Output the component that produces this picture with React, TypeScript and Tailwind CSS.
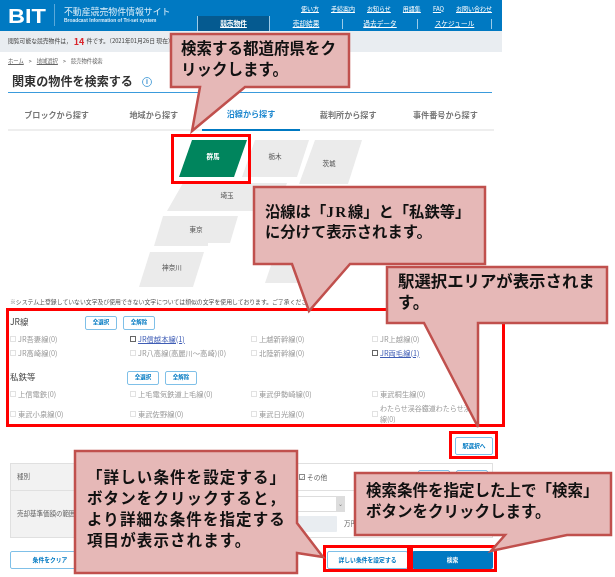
const font = { fontFamily: '"Noto Sans CJK JP","Noto Sans",sans-serif' };

function Link({ children }: { children: string }) {
  return <span className="underline text-white">{children}</span>;
}

function SmallBtn({ children, className = "" }: { children?: string; className?: string }) {
  return (
    <button className={"w-[32px] h-[14px] shrink-0 rounded-[2px] border border-[#7fc0e8] bg-white text-[5.5px] leading-none font-bold text-[#0079c2] " + className}>
      {children}
    </button>
  );
}

function Check({ label, on, tight }: { label: string; on?: boolean; tight?: boolean }) {
  return (
    <div className={tight ? "flex items-center gap-[2px] text-[7px] leading-[11px]" : "flex items-center gap-[2px] text-[7.3px] leading-[11px]"}>
      <span className={on ? "w-[6px] h-[6px] shrink-0 border border-[#666]" : "w-[6px] h-[6px] shrink-0 border border-[#e2e2e2]"} />
      <span className={on ? "text-[#3f5db5] underline" : "text-[#9a9a9a]"}>{label}</span>
    </div>
  );
}

function Row({ items }: { items: { l: string; on?: boolean; tight?: boolean }[] }) {
  return (
    <div className="grid grid-cols-[120px_121px_121px_110px] grid-rows-[14px] h-[14px] items-center">
      {items.map((i) => (
        <Check key={i.l} label={i.l} on={i.on} tight={i.tight} />
      ))}
    </div>
  );
}

const fill = "#e6b8b7";
const line = "#c0504d";

const callouts = [
  "171,34 349,34 349,87 245,87 192,131 200,87 171,87",
  "254,187 485,187 485,264 350,264 309,311 292,264 254,264",
  "387,267 607,267 607,323 478,323 478,427 424,323 387,323",
  "75,451 297,451 297,523 323,557 297,553 297,573 75,573",
  "355,473 611,473 611,535 567,535 491,551 505,535 355,535",
];

const redBoxes = [
  "left-[171px] top-[134px] w-[80px] h-[50px]",
  "left-[6px] top-[308px] w-[499px] h-[119px]",
  "left-[449px] top-[431px] w-[49px] h-[28px]",
  "left-[323px] top-[545px] w-[87px] h-[27px]",
  "left-[410px] top-[545px] w-[87px] h-[27px]",
];

export default function App() {
  return (
    <div style={font} className="relative w-[615px] h-[577px] overflow-hidden bg-white blur-[0.4px]">
      <div className="w-[502px]">
        {/* header */}
        <header className="relative h-[31px] bg-[#0079c2] text-white flex">
          <div className="flex items-center pl-[8px] w-[54px]">
            <span className="inline-block origin-left scale-x-[1.12] text-[21px] leading-none font-black" style={{ fontFamily: '"Liberation Sans",sans-serif' }}>BIT</span>
          </div>
          <div className="w-px h-[22px] mt-[4px] bg-[#5aa9da]" />
          <div className="pl-[9px] pt-[6px]">
            <div className="text-[8.9px] leading-[12px] text-[#d8ecf8]">不動産競売物件情報サイト</div>
            <div className="text-[4.9px] leading-[6px] font-bold text-[#d8ecf8]" style={{ fontFamily: '"Liberation Sans",sans-serif' }}>Broadcast Information of Tri-set system</div>
          </div>
          <div className="ml-auto w-[305px] flex flex-col items-end">
            <div className="h-[16px] pr-[10px] flex items-center gap-[12px] text-[6px]">
              <Link>使い方</Link>
              <Link>手続案内</Link>
              <Link>お知らせ</Link>
              <Link>用語集</Link>
              <Link>FAQ</Link>
              <Link>お問い合わせ</Link>
            </div>
            <nav className="h-[15px] w-[305px] flex items-center text-[6.7px] pr-[10px]">
              <div className="w-[73px] h-full bg-[#055a90] border-x border-[#9ccbe8] flex items-center justify-center font-bold underline">競売物件</div>
              <div className="w-[73px] h-[10px] border-r border-[#9ccbe8] flex items-center justify-center underline">売却結果</div>
              <div className="w-[75px] h-[10px] border-r border-[#9ccbe8] flex items-center justify-center underline">過去データ</div>
              <div className="w-[74px] h-[10px] border-r border-[#9ccbe8] flex items-center justify-center underline">スケジュール</div>
            </nav>
          </div>
        </header>

        {/* notice */}
        <div className="h-[21px] bg-[#e9edf1] pl-[8px] flex items-center text-[5.8px] text-[#444] whitespace-nowrap">
          閲覧可能な競売物件は，<span className="text-[9px] font-bold text-[#d9262c] mx-[2px]">14</span>件です。（2021年01月26日 現在）
        </div>

        {/* breadcrumb */}
        <div className="h-[19px] pl-[8px] flex items-center gap-[5px] text-[5.3px] text-[#666]">
          <span className="underline">ホーム</span><span>&gt;</span><span className="underline">地域選択</span><span>&gt;</span><span>競売物件検索</span>
        </div>

        {/* title */}
        <div className="mx-[8px] w-[484px] h-[22px] pl-[4px] flex items-center gap-[9px] border-b border-[#3a9bdc]">
          <h1 className="text-[12.1px] leading-none font-bold text-[#333]">関東の物件を検索する</h1>
          <span className="w-[10px] h-[10px] rounded-full border border-[#5aa7dc] text-[#3a8fd0] text-[7px] leading-[8px] text-center font-bold" style={{ fontFamily: '"Liberation Sans",sans-serif' }}>i</span>
        </div>

        {/* tabs */}
        <div className="mx-[8px] h-[38px] grid grid-cols-5 border-b-2 border-[#eeeeee] text-[8.1px] text-[#777] font-bold">
          <div className="flex items-center justify-center pt-[6px]">ブロックから探す</div>
          <div className="flex items-center justify-center pt-[6px]">地域から探す</div>
          <div className="flex items-center justify-center pt-[6px] h-[38px] border-b-2 border-[#0079c2] text-[#1e88cf]">沿線から探す</div>
          <div className="flex items-center justify-center pt-[6px]">裁判所から探す</div>
          <div className="flex items-center justify-center pt-[6px]">事件番号から探す</div>
        </div>

        {/* map */}
        <svg width="502" height="165" viewBox="0 131 502 165" className="block">
          <g fill="#ebebeb">
            <polygon points="255,140 309,140 297,177 242,177" />
            <polygon points="315,140 362,140 348,184 299,184" />
            <polygon points="183,183 287,183 277,211 167,211" />
            <polygon points="163,216 238,216 230,243 208,243 208,246 154,246" />
            <polygon points="150,252 204,252 193,287 139,287" />
            <polygon points="283,230 318,230 300,283 265,283" />
          </g>
          <polygon points="192,140 247,140 234,177 179,177" fill="#00855d" />
          <g fontSize="6.6" textAnchor="middle" fill="#555">
            <text x="213" y="159" fill="#ffffff" fontWeight="700">群馬</text>
            <text x="275" y="159">栃木</text>
            <text x="329" y="166">茨城</text>
            <text x="227" y="198">埼玉</text>
            <text x="196" y="232">東京</text>
            <text x="172" y="270">神奈川</text>
          </g>
        </svg>

        {/* note */}
        <div className="h-[12px] ml-[10px] w-fit flex items-center text-[5.87px] text-[#555] whitespace-nowrap">
          ※システム上登録していない文字及び使用できない文字については類似の文字を使用しております。ご了承ください。
        </div>

        {/* lines */}
        <section className="pl-[10px] pt-[8px]">
          <div className="flex items-center h-[14px] text-[8.5px] text-[#444]">
            <span className="w-[75px] pb-[3px]">JR線</span>
            <div className="flex gap-[6px]"><SmallBtn>全選択</SmallBtn><SmallBtn>全解除</SmallBtn></div>
          </div>
          <div className="mt-[2px]">
            <Row items={[{ l: "JR吾妻線(0)" }, { l: "JR信越本線(1)", on: true }, { l: "上越新幹線(0)" }, { l: "JR上越線(0)" }]} />
            <Row items={[{ l: "JR高崎線(0)" }, { l: "JR八高線(高麗川～高崎)(0)" }, { l: "北陸新幹線(0)" }, { l: "JR両毛線(1)", on: true }]} />
          </div>
          <div className="flex items-center h-[14px] mt-[11px] text-[8.5px] text-[#444]">
            <span className="w-[117px] pb-[3px]">私鉄等</span>
            <div className="flex gap-[6px]"><SmallBtn>全選択</SmallBtn><SmallBtn>全解除</SmallBtn></div>
          </div>
          <div className="mt-[2px]">
            <Row items={[{ l: "上信電鉄(0)" }, { l: "上毛電気鉄道上毛線(0)" }, { l: "東武伊勢崎線(0)" }, { l: "東武桐生線(0)" }]} />
          </div>
          <div className="mt-[6px]">
            <Row items={[{ l: "東武小泉線(0)" }, { l: "東武佐野線(0)" }, { l: "東武日光線(0)" }, { l: "わたらせ渓谷鐵道わたらせ渓谷線(0)", tight: true }]} />
          </div>
        </section>

        {/* station button */}
        <div className="mt-[16px] flex justify-end pr-[9px]">
          <button className="w-[38px] h-[18px] rounded-[2px] border border-[#7fc0e8] bg-white text-[5.8px] font-bold text-[#0079c2]">駅選択へ</button>
        </div>

        {/* conditions */}
        <div className="mt-[8px] ml-[10px] w-[483px] h-[75px] border border-[#e0e0e0] text-[6.5px] text-[#666]">
          <div className="flex h-[27px] border-b border-[#e0e0e0]">
            <div className="w-[76px] bg-[#f2f2f2] pl-[6px] flex items-center">種別</div>
            <div className="flex-1 flex items-center pl-[212px]">
              <span className="w-[6px] h-[6px] border border-[#888] mr-[2px] text-[5px] leading-[5px] text-center">✓</span>
              <span className="text-[6.8px]">その他</span>
              <div className="ml-[91px] flex gap-[6px]"><SmallBtn className="w-[31px]" /><SmallBtn /></div>
            </div>
          </div>
          <div className="flex h-[46px]">
            <div className="w-[76px] bg-[#f2f2f2] pl-[6px] flex items-center whitespace-nowrap">売却基準価額の範囲</div>
            <div className="flex-1 pl-[140px] pt-[5px] flex flex-col gap-[4px]">
              <div className="w-[118px] h-[16px] border border-[#ddd] flex justify-end">
                <span className="w-[8px] h-full bg-[#ddd] text-[#777] text-[6px] leading-[14px] text-center">⌄</span>
              </div>
              <div className="flex items-center gap-[7px]">
                <div className="w-[110px] h-[16px] bg-[#e9edf1] rounded-[1px]" />
                <span>万円</span>
              </div>
            </div>
          </div>
        </div>

        {/* actions */}
        <div className="mt-[13px] ml-[10px] w-[483px] h-[18px] flex text-[5.8px] font-bold">
          <button className="w-[80px] rounded-[2px] border border-[#7fc0e8] text-[#0079c2]">条件をクリア</button>
          <button className="ml-auto w-[81px] rounded-[2px] border border-[#7fc0e8] text-[#0079c2]">詳しい条件を設定する</button>
          <button className="ml-[4px] w-[81px] rounded-[2px] bg-[#0079c2] text-white">検索</button>
        </div>
      </div>

      {/* annotations */}
      {redBoxes.map((c) => (
        <div key={c} className={"absolute border-[3px] border-[#ff0000] " + c} />
      ))}
      <svg width="615" height="577" className="absolute left-0 top-0">
        {callouts.map((p) => (
          <polygon key={p} points={p} fill={fill} stroke={line} strokeWidth="2.5" strokeLinejoin="miter" />
        ))}
      </svg>
      <div className="absolute left-[181px] top-[37px] text-[15.5px] leading-[21px] font-bold text-[#111] whitespace-nowrap">検索する都道府県をク<br />リックします。</div>
      <div className="absolute left-[265px] top-[199px] text-[15.3px] leading-[22px] font-bold text-[#111] whitespace-nowrap">
        <div>沿線は「<span className="tracking-[1.5px] leading-none" style={{ fontFamily: '"Liberation Serif",serif' }}>JR</span>線」と「私鉄等」</div>
        <div className="-mt-[2px]">に分けて表示されます。</div>
      </div>
      <div className="absolute left-[398px] top-[270px] text-[16.4px] leading-[21px] font-bold text-[#111] whitespace-nowrap">駅選択エリアが表示されま<br />す。</div>
      <div className="absolute left-[87px] top-[466px] text-[15.5px] tracking-[1.1px] leading-[21px] font-bold text-[#111] whitespace-nowrap">
        <div>「詳しい条件を設定する」</div>
        <div>ボタンをクリックすると，</div>
        <div>より詳細な条件を指定する</div>
        <div>項目が表示されます。</div>
      </div>
      <div className="absolute left-[366px] top-[479px] text-[15.5px] leading-[21px] font-bold text-[#111] whitespace-nowrap">検索条件を指定した上で「検索」<br />ボタンをクリックします。</div>
    </div>
  );
}
